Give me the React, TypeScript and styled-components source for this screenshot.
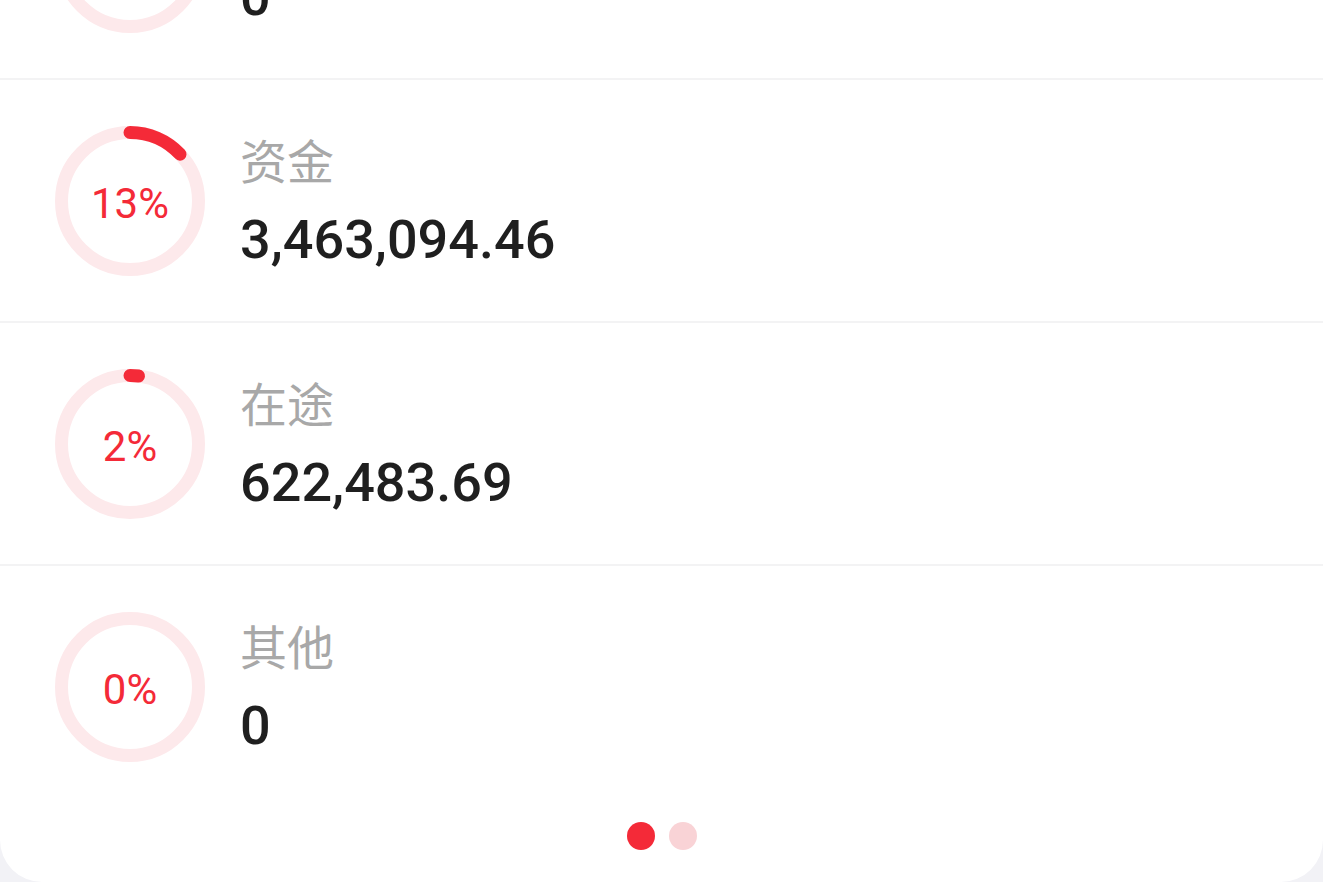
import { useLayoutEffect, useRef } from "react";
import styled, { createGlobalStyle } from "styled-components";

interface AssetItem {
  label: string;
  value: string;
  percent: number;
}

const items: AssetItem[] = [
  { label: "库存", value: "0", percent: 0 },
  { label: "资金", value: "3,463,094.46", percent: 13 },
  { label: "在途", value: "622,483.69", percent: 2 },
  { label: "其他", value: "0", percent: 0 },
];

const RED = "#f42a38";
const RING_SIZE = 150;
const STROKE = 13;
const RADIUS = (RING_SIZE - STROKE) / 2;
const CIRCUMFERENCE = 2 * Math.PI * RADIUS;

function Ring({ percent }: { percent: number }) {
  const length = (CIRCUMFERENCE * percent) / 100;

  return (
    <RingBox>
      <svg width={RING_SIZE} height={RING_SIZE} viewBox={`0 0 ${RING_SIZE} ${RING_SIZE}`}>
        <circle
          cx={RING_SIZE / 2}
          cy={RING_SIZE / 2}
          r={RADIUS}
          fill="none"
          stroke="#fde9eb"
          strokeWidth={STROKE}
        />
        {percent > 0 && (
          <circle
            cx={RING_SIZE / 2}
            cy={RING_SIZE / 2}
            r={RADIUS}
            fill="none"
            stroke={RED}
            strokeWidth={STROKE}
            strokeLinecap="round"
            strokeDasharray={`${length} ${CIRCUMFERENCE}`}
            transform={`rotate(-90 ${RING_SIZE / 2} ${RING_SIZE / 2})`}
          />
        )}
      </svg>
      <Percent>{percent}%</Percent>
    </RingBox>
  );
}

export default function App() {
  const scrollRef = useRef<HTMLDivElement>(null);

  // the view is scrolled down to the end of the card
  useLayoutEffect(() => {
    const el = scrollRef.current;
    if (el) el.scrollTop = el.scrollHeight;
  }, []);

  return (
    <>
      <GlobalStyle />
      <Viewport ref={scrollRef}>
        <Card>
          {items.map((item) => (
            <Row key={item.label}>
              <Ring percent={item.percent} />
              <Info>
                <Label>{item.label}</Label>
                <Amount>{item.value}</Amount>
              </Info>
            </Row>
          ))}
          <Pager>
            <Dot $active />
            <Dot />
          </Pager>
        </Card>
      </Viewport>
    </>
  );
}

const GlobalStyle = createGlobalStyle`
  html, body {
    margin: 0;
    padding: 0;
    background: #f2f2f6;
  }

  body {
    font-family: Roboto, "Noto Sans CJK SC", sans-serif;
  }
`;

const Viewport = styled.div`
  height: 100vh;
  overflow-y: auto;
  scrollbar-width: none;

  &::-webkit-scrollbar {
    display: none;
  }
`;

const Card = styled.div`
  background: #ffffff;
  border-radius: 0 0 42px 42px;
  overflow: hidden;
`;

const Row = styled.div`
  display: flex;
  align-items: center;
  gap: 35px;
  height: 241px;
  padding-left: 55px;
  border-bottom: 2px solid #f3f3f4;

  &:nth-last-of-type(2) {
    border-bottom: none;
  }
`;

const RingBox = styled.div`
  display: grid;
  place-items: center;
  width: ${RING_SIZE}px;
  height: ${RING_SIZE}px;
  flex-shrink: 0;

  & > * {
    grid-area: 1 / 1;
  }
`;

const Percent = styled.span`
  margin-top: 6px;
  font-family: Roboto, sans-serif;
  font-size: 42px;
  line-height: 1;
  color: ${RED};
`;

const Info = styled.div`
  display: flex;
  flex-direction: column;
  gap: 31px;
`;

const Label = styled.div`
  font-family: "Noto Sans CJK SC", sans-serif;
  font-size: 47px;
  line-height: 47px;
  color: #a8a8a8;
`;

const Amount = styled.div`
  font-family: Roboto, sans-serif;
  font-size: 54px;
  font-weight: 500;
  line-height: 54px;
  color: #1f1f1f;
`;

const Pager = styled.div`
  display: flex;
  justify-content: center;
  gap: 14px;
  height: 75px;
  padding-top: 15px;
  box-sizing: border-box;
`;

const Dot = styled.span<{ $active?: boolean }>`
  width: 28px;
  height: 28px;
  border-radius: 50%;
  background: ${(p) => (p.$active ? RED : "#f9d3d6")};
`;
